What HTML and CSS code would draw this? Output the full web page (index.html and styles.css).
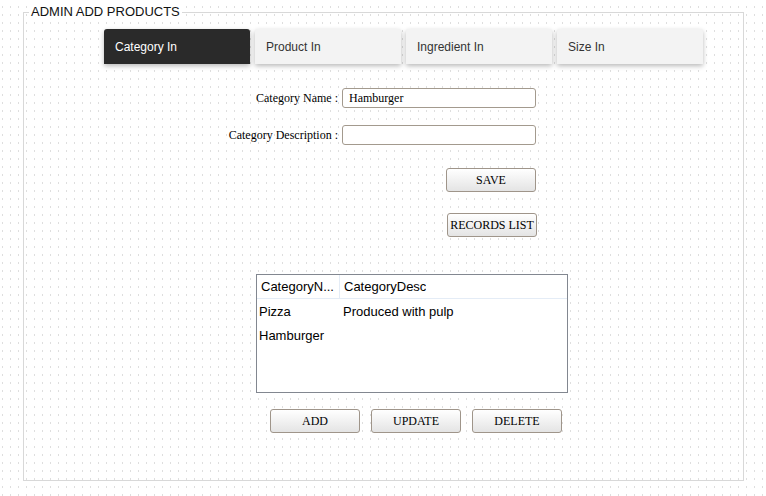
FILE: index.html
```html
<!DOCTYPE html>
<html>
<head>
<meta charset="utf-8">
<link rel="stylesheet" href="styles.css">
</head>
<body>
<fieldset class="panel">
  <legend class="panel-title">ADMIN ADD PRODUCTS</legend>
  <div class="tabs">
    <div class="tab active">Category In</div>
    <div class="tab">Product In</div>
    <div class="tab">Ingredient In</div>
    <div class="tab">Size In</div>
  </div>
  <div class="form">
    <label class="lbl">Category Name :</label>
    <input class="field" type="text" value="Hamburger">
    <label class="lbl">Category Description :</label>
    <input class="field" type="text" value="">
    <button class="btn save">SAVE</button>
    <button class="btn records">RECORDS LIST</button>
  </div>
  <div class="grid">
    <div class="grid-head">
      <div class="cell c1">CategoryN...</div>
      <div class="cell c2">CategoryDesc</div>
    </div>
    <div class="grid-row">
      <div class="cell c1">Pizza</div>
      <div class="cell c2">Produced with pulp</div>
    </div>
    <div class="grid-row">
      <div class="cell c1">Hamburger</div>
      <div class="cell c2"></div>
    </div>
  </div>
  <div class="actions">
    <button class="btn">ADD</button>
    <button class="btn">UPDATE</button>
    <button class="btn">DELETE</button>
  </div>
</fieldset>
</body>
</html>
```
FILE: styles.css
```css
html, body {
  margin: 0;
}
body {
  padding: 4px 22px 0 23px;
  background-color: #fff;
  background-image:
    linear-gradient(#fff 0 6px, transparent 6px),
    linear-gradient(90deg, #dedede 0 1px, #fff 1px);
  background-size: 8px 8px;
  background-position: 2px 0;
  font-family: "Liberation Sans", Arial, sans-serif;
  height: 496px;
  box-sizing: border-box;
}
.panel {
  margin: 0;
  padding: 0 0 47px 0;
  border: 1px solid #d8d8d8;
  min-width: 0;
}
.panel-title {
  margin-left: 5px;
  padding: 0 2px;
  font-size: 13px;
  line-height: 16px;
  color: #111;
  background: #fff;
}
.tabs {
  display: flex;
  gap: 5px;
  margin: 9px 0 0 80px;
}
.tab {
  width: 146px;
  height: 35px;
  line-height: 36px;
  padding-left: 11px;
  box-sizing: border-box;
  font-size: 12px;
  color: #333;
  background: #f3f3f3;
  border-radius: 3px 3px 0 0;
  box-shadow: 0 2px 5px rgba(0,0,0,0.28);
}
.tab.active {
  background: #2a2a2a;
  color: #fff;
}
.form {
  display: grid;
  grid-template-columns: 115px 194px;
  column-gap: 4px;
  row-gap: 17px;
  margin: 24px 0 0 199px;
  width: 313px;
}
.lbl {
  font-family: "Liberation Serif", "Times New Roman", serif;
  font-size: 12px;
  color: #000;
  text-align: right;
  align-self: center;
  white-space: nowrap;
}
.field {
  height: 20px;
  box-sizing: border-box;
  border: 1px solid #a39a8e;
  border-radius: 3px;
  padding: 0 6px;
  font-family: "Liberation Serif", "Times New Roman", serif;
  font-size: 12px;
  color: #000;
  margin: 0;
  background: #fff;
}
.btn {
  width: 90px;
  height: 24px;
  box-sizing: border-box;
  border: 1px solid #9f958a;
  border-radius: 3px;
  background: linear-gradient(#ffffff, #e4e4e4);
  font-family: "Liberation Serif", "Times New Roman", serif;
  font-size: 12px;
  color: #000;
  padding: 0;
  margin: 0;
}
.save {
  grid-column: 2;
  justify-self: end;
  margin-top: 6px;
}
.records {
  grid-column: 2;
  justify-self: end;
  margin-top: 4px;
  margin-right: -1px;
}
.grid {
  margin: 37px 0 0 232px;
  width: 312px;
  height: 119px;
  box-sizing: border-box;
  border: 1px solid #828790;
  background: #fff;
  font-size: 13px;
  color: #000;
}
.grid-head, .grid-row {
  display: flex;
  height: 24px;
  align-items: center;
}
.grid-head {
  height: 23px;
  border-bottom: 1px solid #e4ecf6;
}
.cell {
  box-sizing: border-box;
  white-space: nowrap;
  overflow: hidden;
}
.cell.c1 {
  width: 83px;
  padding-left: 4px;
}
.cell.c2 {
  padding-left: 4px;
}
.grid-head .cell {
  height: 100%;
  line-height: 23px;
}
.grid-head .c1 {
  border-right: 1px solid #e4ecf6;
}
.grid-row .c1 {
  padding-left: 2px;
}
.grid-row .c2 {
  padding-left: 3px;
}
.actions {
  display: flex;
  gap: 11px;
  margin: 16px 0 0 246px;
}
```
